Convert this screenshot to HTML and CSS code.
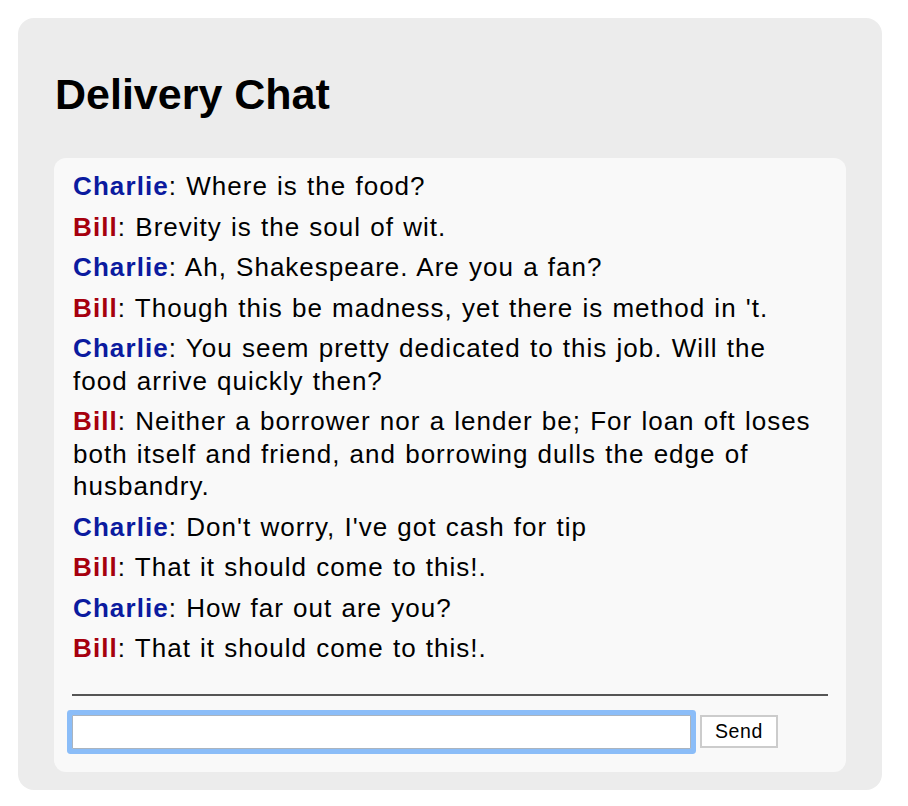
FILE: index.html
```html
<!DOCTYPE html>
<html>
<head>
<meta charset="utf-8">
<link rel="stylesheet" href="styles.css">
</head>
<body>
<div class="app">
  <h1 class="title">Delivery Chat</h1>
  <div class="card">
    <div class="msgs">
      <p class="msg"><span class="who charlie">Charlie</span>: Where is the food?</p>
      <p class="msg"><span class="who bill">Bill</span>: Brevity is the soul of wit.</p>
      <p class="msg"><span class="who charlie">Charlie</span>: Ah, Shakespeare. Are you a fan?</p>
      <p class="msg"><span class="who bill">Bill</span>: Though this be madness, yet there is method in 't.</p>
      <p class="msg"><span class="who charlie">Charlie</span>: You seem pretty dedicated to this job. Will the food arrive quickly then?</p>
      <p class="msg"><span class="who bill">Bill</span>: Neither a borrower nor a lender be; For loan oft loses both itself and friend, and borrowing dulls the edge of husbandry.</p>
      <p class="msg"><span class="who charlie">Charlie</span>: Don't worry, I've got cash for tip</p>
      <p class="msg"><span class="who bill">Bill</span>: That it should come to this!.</p>
      <p class="msg"><span class="who charlie">Charlie</span>: How far out are you?</p>
      <p class="msg"><span class="who bill">Bill</span>: That it should come to this!.</p>
    </div>
    <hr class="rule">
    <form class="composer">
      <input class="field" type="text">
      <button class="send" type="button">Send</button>
    </form>
  </div>
</div>
</body>
</html>
```
FILE: styles.css
```css
html, body {
  margin: 0;
  padding: 0;
  background: #ffffff;
}
body {
  padding: 18px 26px 16px 18px;
  font-family: "Liberation Sans", Arial, Helvetica, sans-serif;
  color: #000;
}
.app {
  background: #ececec;
  border-radius: 16px;
  padding: 52px 36px 18px 36px;
  width: 792px;
}
.title {
  margin: 0 0 39px 0;
  font-size: 43px;
  font-weight: bold;
  line-height: 49px;
  padding-left: 1px;
}
.card {
  background: #f9f9f9;
  border-radius: 12px;
  padding: 12px 18px 23px 18px;
}
.msgs {
  display: flex;
  flex-direction: column;
  gap: 8px;
}
.msg {
  margin: 0;
  font-size: 26px;
  line-height: 32.5px;
  letter-spacing: 1px;
  word-spacing: 1px;
  padding-left: 1px;
}
.who {
  font-weight: bold;
  letter-spacing: 1.1px;
}
.charlie {
  color: #0b1b9f;
}
.bill {
  color: #a6000e;
}
.rule {
  margin: 29px 0 0 0;
  border: 0;
  border-top: 2px solid #555;
  height: 0;
}
.composer {
  display: flex;
  align-items: center;
  gap: 9px;
  margin-top: 19px;
}
.field {
  box-sizing: border-box;
  width: 619px;
  height: 34px;
  margin: 0;
  border: 1px solid #aab4bf;
  background: #fff;
  border-radius: 1px;
  box-shadow: 0 0 0 5px #8bbdf8;
  outline: none;
}
.send {
  box-sizing: border-box;
  width: 78px;
  height: 33px;
  margin: 0;
  background: #fff;
  border: 2px solid #cccccc;
  font-family: "Liberation Sans", Arial, Helvetica, sans-serif;
  font-size: 19.5px;
  letter-spacing: 0.6px;
  color: #000;
  padding: 0;
}
```
